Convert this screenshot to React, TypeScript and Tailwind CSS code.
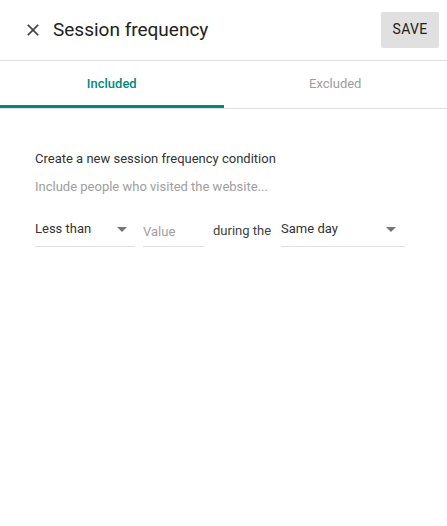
import React from "react";

function Caret() {
  return (
    <svg width="10" height="5" viewBox="0 0 10 5" className="shrink-0">
      <path d="M0 0 L10 0 L5 5 Z" fill="#757575" />
    </svg>
  );
}

export default function App() {
  return (
    <div className="w-[447px] h-[526px] bg-white text-[#212121]" style={{ fontFamily: "Roboto, 'Liberation Sans', sans-serif" }}>
      <div className="h-[61px] flex items-center pl-[23px] pr-[8px] border-b border-[#e0e0e0]">
        <svg width="20" height="20" viewBox="0 0 24 24" className="shrink-0">
          <path d="M19 6.41L17.59 5 12 10.59 6.41 5 5 6.41 10.59 12 5 17.59 6.41 19 12 13.41 17.59 19 19 17.59 13.41 12z" fill="#424242" />
        </svg>
        <div className="ml-[10px] text-[19px] leading-none text-[#212121] -mt-[2px]">Session frequency</div>
        <div className="flex-1" />
        <button className="w-[58px] h-[36px] -mt-[1px] bg-[#e0e0e0] rounded-[2px] text-[14px] font-normal text-[#212121] tracking-[0.3px]">SAVE</button>
      </div>
      <div className="flex border-b border-[#e0e0e0] h-[48px]">
        <div className="w-1/2 flex flex-col">
          <div className="flex-1 flex items-center justify-center text-[13px] font-medium text-[#00897b] pt-[1px]">Included</div>
          <div className="h-[3px] bg-[#00897b]" />
        </div>
        <div className="w-1/2 flex flex-col">
          <div className="flex-1 flex items-center justify-center text-[13px] text-[#9e9e9e] pt-[1px]">Excluded</div>
          <div className="h-[3px]" />
        </div>
      </div>
      <div className="pl-[35px] pt-[42px]">
        <div className="text-[13px] leading-[16px] text-[#333333]">Create a new session frequency condition</div>
        <div className="text-[13px] leading-[16px] text-[#9e9e9e] mt-[12px]">Include people who visited the website...</div>
        <div className="flex items-start mt-[24px] text-[13px] text-[#333333]">
          <div className="w-[100px] h-[28px] border-b border-[#e0e0e0] flex items-start justify-between pr-[8px]">
            <span className="leading-[16px] mt-[2px]">Less than</span>
            <span className="mt-[8px]"><Caret /></span>
          </div>
          <div className="w-[61px] h-[28px] ml-[8px] border-b border-[#e0e0e0]">
            <span className="leading-[16px] block mt-[5px] text-[#9e9e9e]">Value</span>
          </div>
          <span className="ml-[9px] leading-[16px] mt-[4px] text-[#424242]">during the</span>
          <div className="w-[124px] h-[28px] ml-[10px] border-b border-[#e0e0e0] flex items-start justify-between pr-[9px]">
            <span className="leading-[16px] mt-[2px]">Same day</span>
            <span className="mt-[8px]"><Caret /></span>
          </div>
        </div>
      </div>
    </div>
  );
}
